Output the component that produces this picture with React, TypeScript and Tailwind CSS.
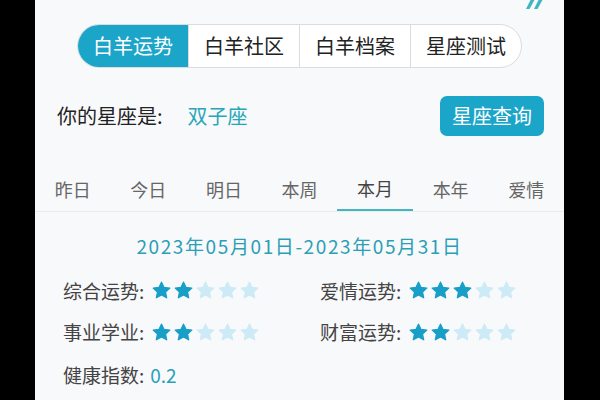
import React from 'react';

const segments = ['白羊运势', '白羊社区', '白羊档案', '星座测试'];
const periods = ['昨日', '今日', '明日', '本周', '本月', '本年', '爱情'];

const Star = ({ filled }: { filled: boolean }) => (
  <svg width="21" height="21" viewBox="0 0 24 24">
    <path
      d="M12 2.5l2.9 6 6.6.8-4.9 4.5 1.3 6.5L12 17l-5.9 3.3 1.3-6.5L2.5 9.3l6.6-.8z"
      fill={filled ? '#179fc7' : '#cdebf6'}
      stroke={filled ? '#179fc7' : '#cdebf6'}
      strokeWidth="1.5"
      strokeLinejoin="round"
    />
  </svg>
);

const Stars = ({ n }: { n: number }) => (
  <div className="flex gap-[1px]">
    {[0, 1, 2, 3, 4].map((i) => (
      <Star key={i} filled={i < n} />
    ))}
  </div>
);

const Rating = ({ label, n }: { label: string; n: number }) => (
  <div className="flex items-center gap-[7px]">
    <span className="text-[19px] text-[#444]">{label}:</span>
    <Stars n={n} />
  </div>
);

export default function App() {
  return (
    <div
      className="w-[600px] h-[400px] bg-black flex overflow-hidden"
      style={{ fontFamily: '"Noto Sans CJK SC", "Noto Sans", sans-serif' }}
    >
      <div className="relative ml-[35px] w-[529px] h-full bg-[#f8f9fb] flex flex-col">
        {/* cut-off quote mark at top */}
        <svg className="absolute left-[490px] top-0" width="20" height="10" viewBox="0 0 20 10">
          <path d="M5.5 0 L9.5 0 L4.5 9 L1 9 Z" fill="#3fb6c0" />
          <path d="M13.5 0 L17.5 0 L12.5 9 L9 9 Z" fill="#3fb6c0" />
        </svg>

        <div className="mt-[24px] ml-[42px] w-[445px] h-[44px] flex rounded-full border border-[#dcdcdc] overflow-hidden bg-white">
          {segments.map((s, i) => (
            <div
              key={s}
              className={
                i === 0
                  ? 'flex-1 flex items-center justify-center bg-[#1ba5c9] text-white text-[20px]'
                  : 'flex-1 flex items-center justify-center border-l border-[#dcdcdc] text-[#222] text-[20px]'
              }
            >
              {s}
            </div>
          ))}
        </div>

        <div className="mt-[28px] flex items-center h-[40px] pl-[22px] pr-[20px]">
          <span className="text-[20px] text-[#222]">你的星座是:</span>
          <span className="ml-[25px] text-[20px] text-[#27a6b8]">双子座</span>
          <button className="ml-auto w-[104px] h-[40px] rounded-[7px] bg-[#1ba5c9] text-white text-[20px]">
            星座查询
          </button>
        </div>

        <div className="mt-[31px] grid grid-cols-7 border-b border-[#e9ecef]">
          {periods.map((p, i) => (
            <div
              key={p}
              className={
                i === 4
                  ? 'h-[44px] flex items-center justify-center text-[18px] text-[#444] border-b-2 border-[#46b5c2] -mb-px'
                  : 'h-[44px] flex items-center justify-center text-[18px] text-[#666]'
              }
            >
              {p}
            </div>
          ))}
        </div>

        <div className="mt-[20px] text-center text-[19px] tracking-[1.6px] text-[#2a9fb7]">
          2023年05月01日-2023年05月31日
        </div>

        <div className="mt-[16px] pl-[28px] grid grid-cols-[257px_1fr] gap-y-[13px]">
          <Rating label="综合运势" n={2} />
          <Rating label="爱情运势" n={3} />
          <Rating label="事业学业" n={2} />
          <Rating label="财富运势" n={2} />
          <div className="flex items-center gap-[6px] mt-[1px]">
            <span className="text-[19px] text-[#444]">健康指数:</span>
            <span className="text-[19px] text-[#2a9fb7]">0.2</span>
          </div>
        </div>
      </div>
    </div>
  );
}
